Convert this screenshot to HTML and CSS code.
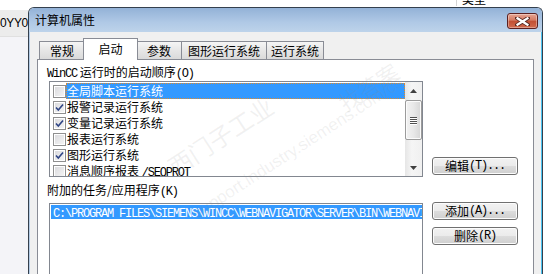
FILE: index.html
```html
<!DOCTYPE html>
<html>
<head>
<meta charset="utf-8">
<link rel="stylesheet" href="styles.css">
</head>
<body>
<div class="desk">
  <div class="desk-top"></div>
  <div class="desk-row"><span>0YY0</span></div>
  <div class="desk-rest"></div>
</div>
<div class="bg-header"><span class="bg-sep"></span><span class="bg-type">类型</span></div>

<div class="dialog">
  <div class="titlebar">
    <span class="title">计算机属性</span>
    <div class="close">
      <svg width="15" height="9" viewBox="0 0 15 9"><path d="M2 1 L13 8 M13 1 L2 8" stroke="#5a2a22" stroke-width="4" stroke-linecap="square"/><path d="M2.5 1.3 L12.5 7.7 M12.5 1.3 L2.5 7.7" stroke="#fff" stroke-width="2.2" stroke-linecap="square"/></svg>
    </div>
  </div>
  <div class="client">
    <div class="tabs">
      <div class="tab t-gen">常规</div>
      <div class="tab active t-start">启动</div>
      <div class="tab t-par">参数</div>
      <div class="tab t-gfx">图形运行系统</div>
      <div class="tab t-rt">运行系统</div>
    </div>
    <div class="panel">
      <div class="label lbl1"><span class="a">WinCC</span> 运行时的启动顺序<span class="a">(O)</span></div>
      <div class="group g1">
        <div class="listbox lb1">
          <div class="items">
            <div class="item"><span class="cb"></span><span class="txt sel">全局脚本运行系统</span></div>
            <div class="item"><span class="cb on"><svg width="11" height="11" viewBox="0 0 11 11"><path d="M2 5.5 L4.3 8 L9 2.5" fill="none" stroke="#2f4585" stroke-width="1.6"/></svg></span><span class="txt">报警记录运行系统</span></div>
            <div class="item"><span class="cb on"><svg width="11" height="11" viewBox="0 0 11 11"><path d="M2 5.5 L4.3 8 L9 2.5" fill="none" stroke="#2f4585" stroke-width="1.6"/></svg></span><span class="txt">变量记录运行系统</span></div>
            <div class="item"><span class="cb"></span><span class="txt">报表运行系统</span></div>
            <div class="item"><span class="cb on"><svg width="11" height="11" viewBox="0 0 11 11"><path d="M2 5.5 L4.3 8 L9 2.5" fill="none" stroke="#2f4585" stroke-width="1.6"/></svg></span><span class="txt">图形运行系统</span></div>
            <div class="item"><span class="cb"></span><span class="txt">消息顺序报表 <span class="a">/SEQPROT</span></span></div>
          </div>
          <div class="vscroll">
            <div class="arrow up"><svg width="7" height="4" viewBox="0 0 7 4"><path d="M0 4 L3.5 0 L7 4 Z" fill="#404040"/></svg></div>
            <div class="thumb"><span class="grip"></span><span class="grip"></span><span class="grip"></span><span class="grip"></span></div>
            <div class="track"></div>
            <div class="arrow down"><svg width="7" height="4" viewBox="0 0 7 4"><path d="M0 0 L3.5 4 L7 0 Z" fill="#404040"/></svg></div>
          </div>
        </div>
        <div class="btncol bc1">
          <button class="btn">编辑<span class="a">(T)...</span></button>
        </div>
      </div>
      <div class="label lbl2">附加的任务/应用程序<span class="a">(K)</span></div>
      <div class="group g2">
        <div class="listbox lb2">
          <div class="path-row"><span class="a">C:\PROGRAM FILES\SIEMENS\WINCC\WEBNAVIGATOR\SERVER\BIN\WEBNAVI</span></div>
        </div>
        <div class="btncol bc2">
          <button class="btn">添加<span class="a">(A)...</span></button>
          <button class="btn">删除<span class="a">(R)</span></button>
        </div>
      </div>
    </div>
  </div>
</div>

<div class="watermark">
  <span class="wm1">西门子工业</span>
  <span class="wm2">找答案</span>
  <span class="wm3">support.industry.siemens.com/cs</span>
</div>
</body>
</html>
```

FILE: styles.css
```css
* { box-sizing: border-box; }
html, body { margin: 0; padding: 0; }
body {
  width: 550px;
  height: 274px;
  overflow: hidden;
  position: relative;
  background: #ffffff;
  font-family: "Noto Sans CJK SC", sans-serif;
  font-size: 12px;
  color: #000;
}

/* background window */
.desk { display: flex; flex-direction: column; width: 28px; height: 274px; }
.desk-top { height: 10px; background: #ffffff; }
.desk-row {
  height: 27px;
  background: #ececec;
  border-bottom: 1px solid #e0e0e0;
  display: flex; align-items: center; justify-content: flex-start;
  font-family: "Liberation Sans", sans-serif;
  font-size: 12px;
  letter-spacing: -0.4px;
  white-space: nowrap;
  overflow: hidden;
}
.desk-rest { flex: 1; background: #f4f4f8; }
.bg-header {
  position: absolute; left: 456px; top: -10px;
  display: flex; align-items: center; height: 16px;
}
.bg-sep { width: 1px; height: 16px; background: #d5d5d5; margin-right: 5px; }
.bg-type { font-size: 12px; }

/* dialog */
.dialog {
  position: absolute; left: 28px; top: 7px;
  width: 515px; height: 267px;
  border: 1px solid #34404e;
  border-bottom: none;
  border-radius: 6px 6px 0 0;
  background: #f0f0f0;
  display: flex; flex-direction: column;
  overflow: hidden;
}
.titlebar {
  height: 24px; flex: none;
  background: linear-gradient(#93b2d7, #b0c9e6 60%, #bdd3ea);
  display: flex; align-items: center;
  padding-left: 6px;
  position: relative;
}
.title { font-size: 12px; line-height: 16px; color: #000; }
.close {
  position: absolute; right: 4px; top: 5px;
  width: 31px; height: 16px;
  border: 1px solid #5b2020;
  border-radius: 3px;
  background: linear-gradient(#e6a593, #d47a62 45%, #c14f33 50%, #d16a4d);
  display: flex; align-items: center; justify-content: center;
  box-shadow: inset 0 0 0 1px rgba(255,255,255,0.35);
}
.client {
  flex: 1;
  min-height: 0;
  background: #f0f0f0;
  border-left: 1px solid #b3cbe6;
  border-right: 1px solid #4cc3f0;
  padding: 6px 7px 0 7px;
  display: flex; flex-direction: column;
}

/* tabs */
.tabs {
  display: flex; align-items: flex-end;
  height: 21px; flex: none; padding-left: 2px;
  position: relative; z-index: 2;
}
.tab {
  height: 18px;
  border: 1px solid #898c95;
  border-bottom: none;
  background: linear-gradient(#f5f5f5, #e6e6e6 50%, #dadada);
  display: flex; align-items: center; justify-content: center;
  font-size: 12px; line-height: 14px;
  margin-left: -1px;
}
.tab:first-child { margin-left: 0; }
.tab.active {
  height: 22px; margin-bottom: -1px;
  background: #ffffff;
  margin-left: -2px; margin-right: -1px;
  position: relative; z-index: 3;
  padding-bottom: 2px;
}
.t-gen { width: 46px; }
.t-start { width: 55px; }
.t-par { width: 46px; }
.t-gfx { width: 86px; }
.t-rt { width: 58px; }

/* panel */
.panel {
  flex: 1;
  min-height: 0;
  overflow: hidden;
  background: #ffffff;
  border: 1px solid #898c95;
  border-bottom: none;
  padding: 4px 9px 0 11px;
  position: relative; z-index: 1;
}
.a {
  font-family: "Liberation Mono", monospace;
  letter-spacing: -1.2px;
  font-size: 12px;
}
.label { height: 16px; line-height: 16px; white-space: nowrap; margin-left: -2px; }
.lbl1 { margin-bottom: 1px; }
.lbl2 { margin-top: 5px; margin-bottom: 5px; }

.group { display: flex; align-items: flex-start; }
.listbox {
  width: 374px;
  border: 1px solid #828790;
  background: #ffffff;
  flex: none;
}
.lb1 { height: 96px; display: flex; }
.items { flex: 1; padding-top: 1px; overflow: hidden; }
.item { height: 16px; display: flex; align-items: center; white-space: nowrap; }
.cb {
  width: 13px; height: 13px; flex: none;
  margin-left: 3px; margin-right: 0;
  border: 1px solid #8f8f8f;
  background: linear-gradient(135deg, #d9d9dc, #f6f6f6);
  box-shadow: inset 0 0 0 1px #ffffff;
  display: flex; align-items: center; justify-content: center;
}
.txt { padding-left: 1px; line-height: 16px; height: 16px; }
.txt.sel {
  flex: 1;
  background: #3399ff;
  color: #ffffff;
  outline: 1px dotted #e08a2c;
  outline-offset: -1px;
}
.vscroll {
  width: 17px; flex: none;
  display: flex; flex-direction: column;
  background: linear-gradient(90deg, #e6e6e6, #f5f5f5 40%, #f0f0f0);
}
.arrow { height: 17px; display: flex; align-items: center; justify-content: center; flex: none; }
.thumb {
  height: 40px; flex: none;
  margin: 1px 0 0 0;
  border: 1px solid #9b9b9b;
  border-radius: 2px;
  background: linear-gradient(90deg, #f2f2f2, #e8e8e8 50%, #d6d6d6);
  box-shadow: inset 0 0 0 1px #fbfbfb;
  display: flex; flex-direction: column; align-items: center; justify-content: center; gap: 1px;
}
.grip { width: 7px; height: 1px; background: #505050; box-shadow: 0 1px 0 #ffffff; }
.track { flex: 1; }

.btncol { display: flex; flex-direction: column; margin-left: 9px; }
.bc1 { margin-top: 76px; }
.bc2 { margin-top: -1px; gap: 7px; }
.btn {
  width: 86px; height: 18px;
  border: 1px solid #707070;
  border-radius: 3px;
  background: linear-gradient(#f2f2f2, #ebebeb 50%, #dddddd 50%, #cfcfcf);
  box-shadow: inset 0 0 0 1px #fcfcfc;
  font-family: "Noto Sans CJK SC", sans-serif;
  font-size: 12px; line-height: 14px;
  padding: 0;
  color: #000;
  display: flex; align-items: center; justify-content: center;
}
.lb2 { height: 80px; padding: 1px 0 0 1px; overflow: hidden; }
.path-row {
  height: 14px; line-height: 14px;
  background: #3399ff; color: #ffffff;
  white-space: nowrap; overflow: hidden;
  padding-left: 2px;
}

/* watermark */
.watermark { position: absolute; left: 0; top: 0; width: 550px; height: 274px; pointer-events: none; z-index: 10; overflow: hidden; }
.watermark span { position: absolute; white-space: nowrap; color: rgba(140,140,140,0.12); }
.wm1 { left: 160px; top: 118px; font-size: 24px; transform: rotate(-33deg); }
.wm2 { left: 335px; top: 70px; font-size: 22px; transform: rotate(-33deg); }
.wm3 { left: 175px; top: 138px; font-family: "Liberation Sans", sans-serif; font-size: 17px; transform: rotate(-33deg); }
```
